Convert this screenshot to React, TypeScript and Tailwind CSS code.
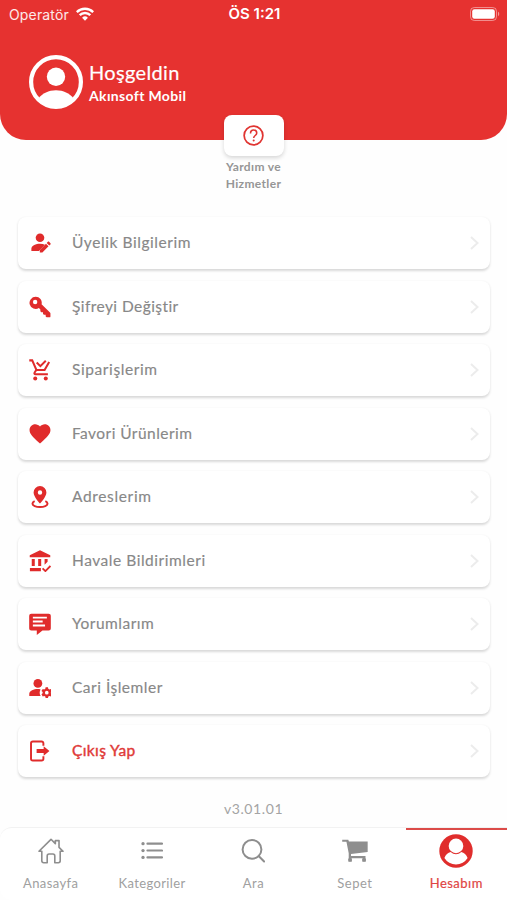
import React from "react";

type IconProps = { className?: string };

const Svg = ({ className, children }: { className?: string; children: React.ReactNode }) => (
  <svg viewBox="0 0 24 24" fill="currentColor" className={className}>
    {children}
  </svg>
);

const UserEditIcon = ({ className }: IconProps) => (
  <Svg className={className}>
    <circle cx="12" cy="6.300" r="4.700" />
    <path d="M2.600 20.600v-2.300c0-3.400 5.200-5.400 9.400-5.400 2 0 3.900.3 5.400 1l-6.600 6.700z" />
    <path d="M11.800 22.300v-2.800l6.700-6.700 2.800 2.800-6.700 6.700zM19.300 12l1.300-1.300c.4-.4.9-.4 1.300 0l1.500 1.500c.4.4.4.9 0 1.300l-1.300 1.300z" />
  </Svg>
);

const KeyIcon = ({ className }: IconProps) => (
  <Svg className={className}>
    <path
      fillRule="evenodd"
      d="M7.300.8a6.600 6.600 0 0 1 6.400 8.300l9.200 8.800c.3.3.5.7.5 1.100v3.300c0 .6-.4 1-1 1h-3.200l-1-1v-1.800h-1.900l-1-1V17.600h-1.900l-1-1v-1.900l-1.600-1.500A6.700 6.700 0 1 1 7.300.8zM6.700 4.200a2.400 2.400 0 1 0 0 4.800 2.400 2.400 0 0 0 0-4.800z"
    />
  </Svg>
);

const CartCheckIcon = ({ className }: IconProps) => (
  <Svg className={className}>
    <g fill="none" stroke="currentColor" strokeWidth="2.200">
      <path d="M.3 1.500h3.200l4.600 10.500h8.900l5-8.800" />
      <path d="M7.900 12 6 15.100c-.4.800 0 1.600 1 1.600h13.600" />
      <path d="m8.400 3.800 4 4 5.900-5.900" />
    </g>
    <circle cx="6.800" cy="21.300" r="2.200" />
    <circle cx="18.300" cy="21.300" r="2.200" />
  </Svg>
);

const HeartIcon = ({ className }: IconProps) => (
  <Svg className={className}>
    <path d="m12 22.300-1.600-1.400C4.500 15.500.6 12 .6 7.600.6 4 3.300 1.300 6.800 1.300c2 0 4 1 5.200 2.500 1.200-1.500 3.200-2.500 5.200-2.500 3.500 0 6.200 2.700 6.200 6.300 0 4.400-3.900 7.900-9.800 13.300z" />
  </Svg>
);

const AddressIcon = ({ className }: IconProps) => (
  <Svg className={className}>
    <path
      fillRule="evenodd"
      d="M12 0a7 7 0 0 1 7 7c0 4.800-7 12-7 12S5 11.800 5 7a7 7 0 0 1 7-7zm0 4.700a2.400 2.400 0 1 0 0 4.800 2.400 2.400 0 0 0 0-4.800z"
    />
    <path
      d="M6.200 16.500C4.700 17.200 3.800 18.200 3.800 19.300c0 2.100 3.700 3.600 8.200 3.600s8.200-1.500 8.200-3.600c0-1.100-.9-2.100-2.400-2.800"
      fill="none"
      stroke="currentColor"
      strokeWidth="2.200"
    />
  </Svg>
);

const BankIcon = ({ className }: IconProps) => (
  <Svg className={className}>
    <path d="M12 .2.800 5.600V8h22.400V5.600zM3 9.800h3.300v7.700H3zM10 9.800h3.300v7.700H10zM17 9.800h3.300v3L17 16zM1 19.600h12v3.700H1z" />
    <path d="m14.800 20 3.100 3 5.500-5.600" fill="none" stroke="currentColor" strokeWidth="2" />
  </Svg>
);

const CommentIcon = ({ className }: IconProps) => (
  <Svg className={className}>
    <path
      fillRule="evenodd"
      d="M2.500.7h19A2.300 2.300 0 0 1 23.800 3v13.800a2.300 2.300 0 0 1-2.300 2.300h-6.800L8.500 24v-4.900h-6A2.300 2.300 0 0 1 .2 16.800V3A2.300 2.300 0 0 1 2.500.7zM4.200 4v2h15.300V4zM4.200 8.300v2h10.700v-2zM4.200 12.600v2h13.300v-2z"
    />
  </Svg>
);

const UserCogIcon = ({ className }: IconProps) => (
  <Svg className={className}>
    <circle cx="9.700" cy="7" r="4.800" />
    <path d="M.3 20.800v-2.400c0-3.200 5-5.200 9.400-5.200 1 0 2 .1 2.900.3a7.500 7.500 0 0 0 .1 7.300z" />
    <path
      fillRule="evenodd"
      d="m18.100 11.300-.3 1.600-1.300.7-1.500-.6-1.400 2.400 1.300 1v1.400l-1.300 1 1.400 2.400 1.500-.6 1.300.7.300 1.600h2.600l.3-1.600 1.300-.7 1.500.6 1.400-2.400-1.300-1v-1.400l1.300-1-1.400-2.400-1.500.6-1.300-.7-.3-1.600zm1.300 3.800a2 2 0 1 1 0 4 2 2 0 0 1 0-4z"
    />
  </Svg>
);

const ExitIcon = ({ className }: IconProps) => (
  <Svg className={className}>
    <path
      d="M15.700 6.200V3.600c0-1.200-.8-2-2-2H4.200c-1.200 0-2 .8-2 2v16.800c0 1.200.8 2 2 2h9.500c1.200 0 2-.8 2-2v-2.600"
      fill="none"
      stroke="currentColor"
      strokeWidth="2.100"
    />
    <path d="M8.300 9.700h7.700V6.700L22.300 12 16 17.300v-3H8.300z" />
  </Svg>
);

const HelpIcon = ({ className }: IconProps) => (
  <Svg className={className}>
    <circle cx="12" cy="12" r="10.700" fill="none" stroke="currentColor" strokeWidth="2" />
    <path
      d="M8.600 9.600c0-2.300 1.400-3.800 3.500-3.800s3.600 1.400 3.600 3.300c0 3-3.500 2.800-3.500 5.700"
      fill="none"
      stroke="currentColor"
      strokeWidth="1.800"
    />
    <circle cx="12.200" cy="17.700" r="1.200" />
  </Svg>
);

const HomeIcon = ({ className }: IconProps) => (
  <Svg className={className}>
    <path
      d="M.9 12.200 12 1.200l4 4V2.400h3.400v6.200l3.700 3.600h-2.600v8.800c0 1-.7 1.800-1.700 1.800h-3.300v-6.300c0-1-.7-1.700-1.700-1.700h-3.600c-1 0-1.700.7-1.700 1.700v6.300H5.200c-1 0-1.700-.8-1.700-1.800v-8.800z"
      fill="none"
      stroke="currentColor"
      strokeWidth="1.500"
      strokeLinejoin="round"
    />
  </Svg>
);

const ListIcon = ({ className }: IconProps) => (
  <Svg className={className}>
    <circle cx="2.200" cy="4" r="1.800" />
    <circle cx="2.200" cy="11.500" r="1.800" />
    <circle cx="2.200" cy="19" r="1.800" />
    <path d="M7 4h16M7 11.500h16M7 19h16" fill="none" stroke="currentColor" strokeWidth="2.300" strokeLinecap="round" />
  </Svg>
);

const SearchIcon = ({ className }: IconProps) => (
  <Svg className={className}>
    <g fill="none" stroke="currentColor" strokeWidth="2" strokeLinecap="round">
      <circle cx="11" cy="10.400" r="9.400" />
      <path d="m17.900 17.300 5.200 5.200" />
    </g>
  </Svg>
);

const BasketIcon = ({ className }: IconProps) => (
  <Svg className={className}>
    <path d="M.2 1.700h5.600l.6 1.500h17.300v9.800L8.300 14.800v1.900h13.400v4.700h-2.600v-2.600H8.700v2.600H6.200V14L4.100 3.500H.2z" />
    <rect x="5.800" y="18.800" width="3.300" height="3.200" rx=".8" />
    <rect x="18.700" y="18.800" width="3.300" height="3.200" rx=".8" />
  </Svg>
);

const AccountIcon = ({ className }: IconProps) => (
  <svg viewBox="0 0 34 34" className={className}>
    <circle cx="17" cy="17" r="16.700" fill="currentColor" />
    <circle cx="17" cy="11.900" r="7.300" fill="#fff" />
    <path d="M5.400 24c1.200-3.300 3.500-5.300 6.400-6 3.100 3 7.300 3 10.400 0 2.900.7 5.200 2.700 6.400 6a13.600 13.600 0 0 1-23.200 0z" fill="#fff" />
  </svg>
);

const AvatarIcon = ({ className }: IconProps) => (
  <svg viewBox="0 0 54 54" className={className}>
    <circle cx="27" cy="27" r="24.900" fill="none" stroke="currentColor" strokeWidth="4.200" />
    <circle cx="27" cy="21.800" r="9.200" fill="currentColor" />
    <path d="M9.500 43.500C13.500 38.300 19.600 35.300 27 35.300s13.500 3 17.500 8.200A25 25 0 0 1 27 52a25 25 0 0 1-17.500-8.500z" fill="currentColor" />
  </svg>
);

const WifiIcon = ({ className }: IconProps) => (
  <svg viewBox="0 0 18 14" className={className}>
    <g fill="none" stroke="currentColor" strokeWidth="2.400">
      <path d="M.8 5.100a11.700 11.700 0 0 1 16.400 0" />
      <path d="M3.700 8.200a7.500 7.500 0 0 1 10.600 0" />
    </g>
    <path d="M6.100 10.700a4.200 4.200 0 0 1 5.800 0L9 13.700z" fill="currentColor" />
  </svg>
);

const BatteryIcon = ({ className }: IconProps) => (
  <svg viewBox="0 0 30 14" className={className}>
    <rect x=".5" y=".5" width="26" height="13" rx="3.800" fill="none" stroke="#fff" strokeOpacity=".45" />
    <rect x="2.200" y="2.200" width="22.600" height="9.600" rx="2.200" fill="#fff" />
    <path d="M28 4.800c1.600.6 1.600 3.800 0 4.400z" fill="#fff" fillOpacity=".5" />
  </svg>
);

const menuItems = [
  { label: "Üyelik Bilgilerim", icon: UserEditIcon, text: "tracking-[0.57px]" },
  { label: "Şifreyi Değiştir", icon: KeyIcon, text: "tracking-[0.43px]" },
  { label: "Siparişlerim", icon: CartCheckIcon, text: "tracking-[0.6px]" },
  { label: "Favori Ürünlerim", icon: HeartIcon, text: "tracking-[0.45px]" },
  { label: "Adreslerim", icon: AddressIcon, text: "tracking-[0.65px]" },
  { label: "Havale Bildirimleri", icon: BankIcon, text: "tracking-[0.54px]" },
  { label: "Yorumlarım", icon: CommentIcon, text: "tracking-[0.5px]" },
  { label: "Cari İşlemler", icon: UserCogIcon, text: "tracking-[0.5px]" },
  { label: "Çıkış Yap", icon: ExitIcon, text: "tracking-[0.4px]", danger: true },
];

const tabs = [
  { label: "Anasayfa", icon: HomeIcon, size: "size-[26px]", text: "tracking-[0.4px]" },
  { label: "Kategoriler", icon: ListIcon, size: "size-[22px]", text: "tracking-[0.38px]" },
  { label: "Ara", icon: SearchIcon, size: "size-6", text: "tracking-[0.5px]" },
  { label: "Sepet", icon: BasketIcon, size: "size-[26px]", text: "tracking-[0.5px]" },
  { label: "Hesabım", icon: AccountIcon, size: "size-[34px]", text: "tracking-[0.5px]", active: true },
];

export default function App() {
  return (
    <div className="flex h-[900px] w-[507px] flex-col overflow-hidden bg-[#fefefe] font-['Lato','Noto_Sans',sans-serif]">
      <header className="h-[140px] shrink-0 rounded-b-[26px] bg-[#e63230] text-white">
        <div className="grid h-7 grid-cols-3 items-center pr-[7px] pl-[9px] font-['Inter',sans-serif] text-[14px]">
          <div className="flex items-center gap-[7px] text-white/90">
            <span className="tracking-[0.15px]">Operatör</span>
            <WifiIcon className="h-[14px] w-[18px] text-white" />
          </div>
          <span className="text-center text-[15px] font-semibold">ÖS 1:21</span>
          <BatteryIcon className="h-[14px] w-[30px] justify-self-end" />
        </div>
        <div className="mt-[27px] ml-[29px] flex items-center gap-1.5">
          <AvatarIcon className="size-[54px]" />
          <div className="pt-[3px]">
            <p className="text-[20px] leading-6 tracking-[0.35px] [-webkit-text-stroke:0.2px]">Hoşgeldin</p>
            <p className="text-[14px] leading-6 font-bold tracking-[0.35px]">Akınsoft Mobil</p>
          </div>
        </div>
      </header>

      <div className="z-10 -mt-[25px] flex shrink-0 flex-col items-center">
        <button className="flex h-[41px] w-[60px] items-center justify-center rounded-lg bg-white text-[#e03532] shadow-[0_2px_4px_rgba(0,0,0,0.16)]">
          <HelpIcon className="size-[21px]" />
        </button>
        <p className="mt-[3px] w-[70px] text-center text-[12px] leading-[16.500px] font-bold tracking-[0.35px] text-[#969696]">
          Yardım ve Hizmetler
        </p>
      </div>

      <main className="mt-[25px] flex flex-col gap-[11.500px] pr-[17px] pl-[18px]">
        {menuItems.map(({ label, icon: Icon, text, danger }) => (
          <button
            key={label}
            className="flex h-[52px] shrink-0 items-center rounded-lg bg-white pr-[9px] pl-[11px] shadow-[0_1.500px_2.500px_rgba(0,0,0,0.15)]"
          >
            <Icon className="size-[22px] shrink-0 text-[#e02b2b]" />
            <span
              className={`ml-[21px] flex-1 text-left text-[15.500px] ${text} ${
                danger
                  ? "text-[#e03a38] [-webkit-text-stroke:0.4px]"
                  : "text-[#888888] [-webkit-text-stroke:0.15px]"
              }`}
            >
              {label}
            </span>
            <svg viewBox="0 0 14 16" className="h-4 w-[14px] text-[#ececec]">
              <path d="m4 2 6.500 6L4 14" fill="none" stroke="currentColor" strokeWidth="2" />
            </svg>
          </button>
        ))}
      </main>

      <p className="mt-[22px] shrink-0 text-center text-[14px] leading-5 tracking-[0.6px] text-[#a4a4a4]">v3.01.01</p>

      <nav className="mt-auto grid h-[73px] shrink-0 grid-cols-5 overflow-hidden rounded-l-xl border-t border-[#f2f2f2] bg-white">
        {tabs.map(({ label, icon: Icon, size, text, active }) => (
          <button
            key={label}
            className={`flex flex-col items-center border-t-2 ${
              active ? "border-[#dc4b49] text-[#e02d2c]" : "border-transparent text-[#8e8e8e]"
            }`}
          >
            <span className="flex h-[42px] items-center justify-center">
              <Icon className={size} />
            </span>
            <span
              className={`mt-px text-[13px] leading-5 ${text} ${
                active ? "text-[#e04543] [-webkit-text-stroke:0.2px]" : "text-[#a0a0a0]"
              }`}
            >
              {label}
            </span>
          </button>
        ))}
      </nav>
    </div>
  );
}
